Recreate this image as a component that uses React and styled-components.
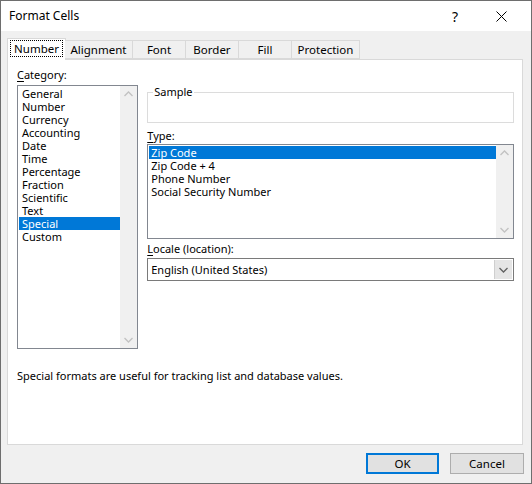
import React from "react";
import styled, { createGlobalStyle } from "styled-components";

const Global = createGlobalStyle`
  html, body { margin: 0; padding: 0; background: #fff; }
  body { font-family: "Noto Sans", "DejaVu Sans", sans-serif; font-size: 11px; color: #000; }
  * { box-sizing: border-box; }
`;

const Win = styled.div`
  width: 532px;
  height: 484px;
  border: 1px solid #6e6e6e;
  background: #f0f0f0;
  display: flex;
  flex-direction: column;
`;

const TitleBar = styled.div`
  height: 30px;
  background: #fff;
  display: flex;
  align-items: center;
  padding-left: 8px;
  padding-right: 7px;
  flex-shrink: 0;
`;

const Title = styled.div`
  flex: 1;
  font-size: 12px;
  line-height: 16px;
`;

const TitleBtn = styled.div`
  width: 46px;
  height: 30px;
  display: flex;
  align-items: center;
  justify-content: center;
  font-size: 14px;
`;

const Body = styled.div`
  flex: 1;
  display: flex;
  flex-direction: column;
  padding: 7px 7px 0 6px;
`;

const TabStrip = styled.div`
  display: flex;
  align-items: flex-end;
  height: 21px;
  padding-left: 1px;
  position: relative;
  z-index: 1;
`;

const Tab = styled.div`
  width: ${(p) => p.w}px;
  height: ${(p) => (p.active ? 22 : 19)}px;
  margin-bottom: ${(p) => (p.active ? -1 : 0)}px;
  margin-left: ${(p) => (p.active ? -1 : 0)}px;
  margin-right: ${(p) => (p.active ? -1 : 0)}px;
  border: 1px solid #d9d9d9;
  border-bottom: ${(p) => (p.active ? "none" : "1px solid #d9d9d9")};
  border-left: ${(p) => (p.active || p.first ? "1px solid #d9d9d9" : "none")};
  background: ${(p) => (p.active ? "#fff" : "#f0f0f0")};
  display: flex;
  align-items: ${(p) => (p.active ? "flex-start" : "center")};
  padding-top: ${(p) => (p.active ? 2 : 0)}px;
  justify-content: center;
  line-height: 16px;
  font-size: 11.5px;
`;

const Focus = styled.span`
  outline: 1px dotted #000;
  outline-offset: 0;
  padding: 0 3px;
  line-height: 15px;
`;

const Panel = styled.div`
  height: 386px;
  background: #fff;
  border: 1px solid #d9d9d9;
  margin-right: 1px;
  padding: 7px 8px 0 9px;
  display: flex;
  flex-direction: column;
`;

const Columns = styled.div`
  display: flex;
  gap: 9px;
`;

const LeftCol = styled.div`
  width: 122px;
  display: flex;
  flex-direction: column;
`;

const RightCol = styled.div`
  width: 369px;
  display: flex;
  flex-direction: column;
  padding-top: 17px;
`;

const Label = styled.div`
  line-height: 16px;
  height: 16px;
  margin-top: ${(p) => p.mt || 0}px;
  u { text-decoration: underline; text-underline-offset: 2px; }
`;

const ListBox = styled.div`
  height: ${(p) => p.h}px;
  margin-top: ${(p) => p.mt || 0}px;
  border: 1px solid #828790;
  display: flex;
  background: #fff;
`;

const Items = styled.div`
  flex: 1;
  padding: 1px 0 0 1px;
`;

const Item = styled.div`
  height: 13px;
  line-height: 13px;
  padding-left: ${(p) => p.pl}px;
  background: ${(p) => (p.sel ? "#0078d7" : "transparent")};
  color: ${(p) => (p.sel ? "#fff" : "#000")};
  white-space: nowrap;
`;

const ScrollBar = styled.div`
  width: 17px;
  background: #f0f0f0;
  display: flex;
  flex-direction: column;
  justify-content: space-between;
  align-items: center;
  padding: 5px 0;
`;

const Chevron = ({ up, color = "#c2c2c2" }) => (
  <svg width="9" height="6" viewBox="0 0 9 6">
    <path
      d={up ? "M0.5 5 L4.5 1 L8.5 5" : "M0.5 1 L4.5 5 L8.5 1"}
      fill="none"
      stroke={color}
      strokeWidth="1.3"
    />
  </svg>
);

const Fieldset = styled.fieldset`
  margin: 0;
  padding: 0;
  height: 39px;
  border: 1px solid #dcdcdc;
  legend {
    padding: 0 1px;
    margin-left: 5px;
    line-height: 16px;
    font-size: 11px;
  }
`;

const Combo = styled.div`
  margin-top: 1px;
  height: 23px;
  border: 1px solid #7a7a7a;
  display: flex;
  align-items: stretch;
  background: #fff;
`;

const ComboText = styled.div`
  flex: 1;
  padding-left: 3px;
  display: flex;
  align-items: center;
`;

const ComboBtn = styled.div`
  width: 18px;
  margin: 1px;
  background: #e5e5e5;
  border-left: 1px solid #cfcfcf;
  display: flex;
  align-items: center;
  justify-content: center;
`;

const Desc = styled.div`
  margin-top: 19px;
  line-height: 16px;
`;

const Footer = styled.div`
  display: flex;
  justify-content: flex-end;
  gap: 11px;
  padding-top: 8px;
  padding-right: 0;
`;

const Button = styled.div`
  width: ${(p) => p.w}px;
  height: 21px;
  background: #e1e1e1;
  border: ${(p) => (p.def ? "2px solid #0078d7" : "1px solid #adadad")};
  display: flex;
  align-items: center;
  justify-content: center;
  line-height: 16px;
  font-size: 11.5px;
`;

const categories = [
  "General",
  "Number",
  "Currency",
  "Accounting",
  "Date",
  "Time",
  "Percentage",
  "Fraction",
  "Scientific",
  "Text",
  "Special",
  "Custom",
];

const types = ["Zip Code", "Zip Code + 4", "Phone Number", "Social Security Number"];

const tabs = [
  ["Number", 59],
  ["Alignment", 68],
  ["Font", 53],
  ["Border", 53],
  ["Fill", 53],
  ["Protection", 68],
];

export default function App() {
  return (
    <>
      <Global />
      <Win>
        <TitleBar>
          <Title>Format Cells</Title>
          <TitleBtn>?</TitleBtn>
          <TitleBtn>
            <svg width="11" height="11" viewBox="0 0 11 11">
              <path d="M0.5 0.5 L10.5 10.5 M10.5 0.5 L0.5 10.5" stroke="#000" strokeWidth="1" />
            </svg>
          </TitleBtn>
        </TitleBar>
        <Body>
          <TabStrip>
            {tabs.map(([t, w], i) => (
              <Tab key={t} w={w} active={i === 0} first={i === 0}>
                {i === 0 ? <Focus>{t}</Focus> : t}
              </Tab>
            ))}
          </TabStrip>
          <Panel>
            <Columns>
              <LeftCol>
                <Label>
                  <u>C</u>ategory:
                </Label>
                <ListBox h={264} mt={2}>
                  <Items>
                    {categories.map((c) => (
                      <Item key={c} pl={3} sel={c === "Special"}>
                        {c}
                      </Item>
                    ))}
                  </Items>
                  <ScrollBar>
                    <Chevron up />
                    <Chevron />
                  </ScrollBar>
                </ListBox>
              </LeftCol>
              <RightCol>
                <Fieldset>
                  <legend>Sample</legend>
                </Fieldset>
                <Label mt={5}>
                  <u>T</u>ype:
                </Label>
                <ListBox h={95}>
                  <Items>
                    {types.map((t) => (
                      <Item key={t} pl={2} sel={t === "Zip Code"}>
                        {t}
                      </Item>
                    ))}
                  </Items>
                  <ScrollBar>
                    <Chevron up />
                    <Chevron />
                  </ScrollBar>
                </ListBox>
                <Label mt={2}>
                  <u>L</u>ocale (location):
                </Label>
                <Combo>
                  <ComboText>English (United States)</ComboText>
                  <ComboBtn>
                    <Chevron color="#606060" />
                  </ComboBtn>
                </Combo>
              </RightCol>
            </Columns>
            <Desc>Special formats are useful for tracking list and database values.</Desc>
          </Panel>
          <Footer>
            <Button w={73} def>
              OK
            </Button>
            <Button w={74}>Cancel</Button>
          </Footer>
        </Body>
      </Win>
    </>
  );
}
